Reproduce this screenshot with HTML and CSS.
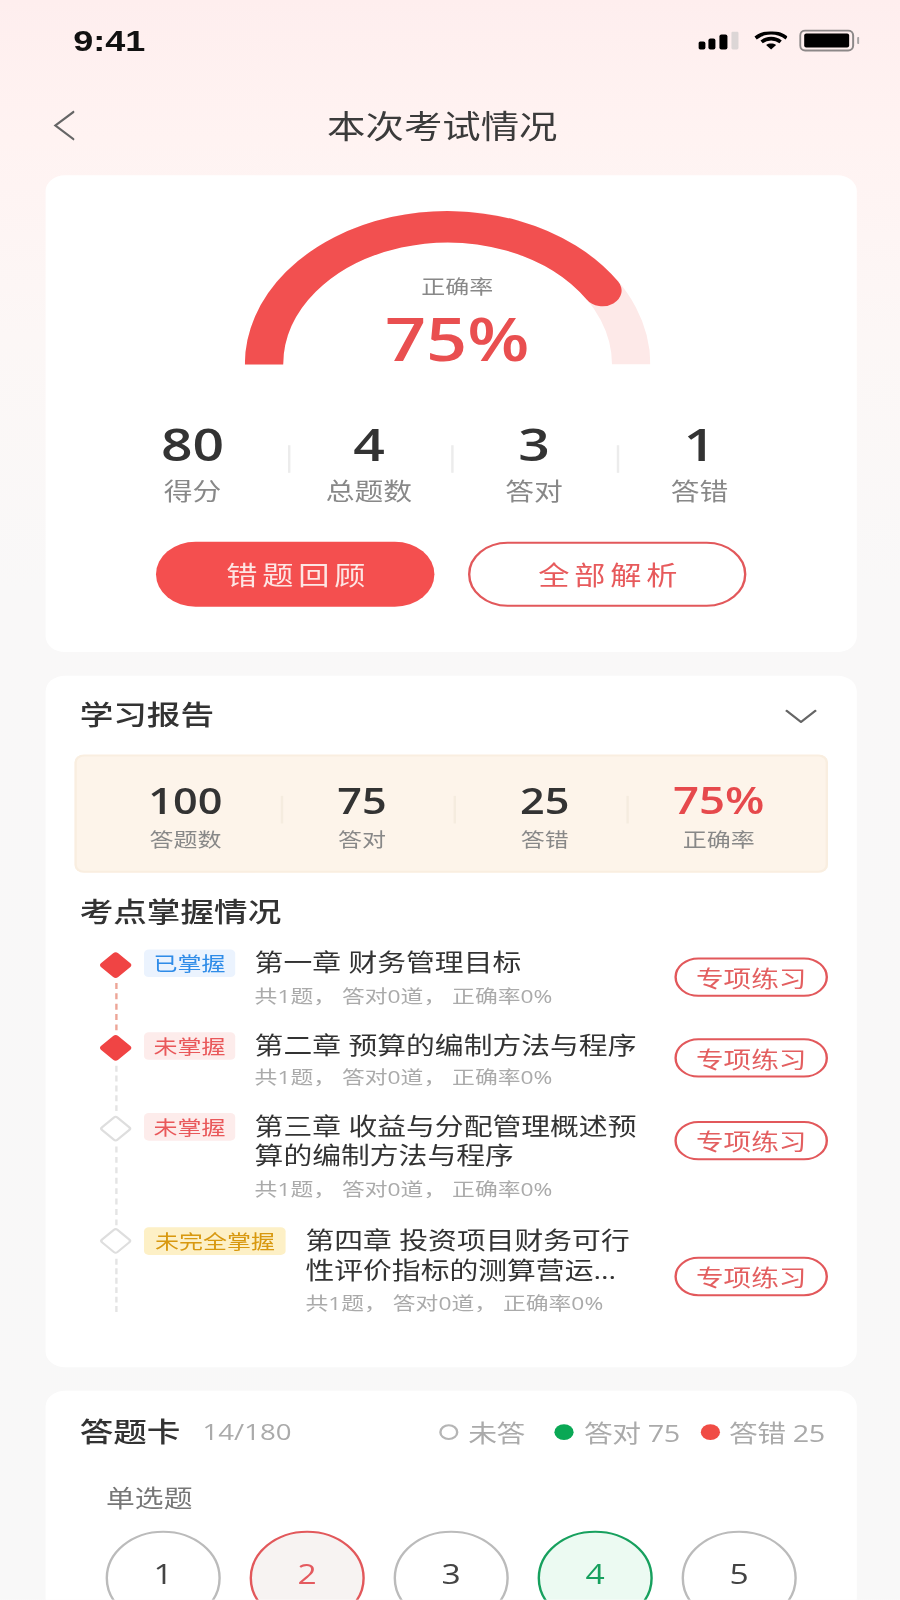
FILE: index.html
```html
<!DOCTYPE html>
<html lang="zh-CN">
<head>
<meta charset="utf-8">
<title>本次考试情况</title>
<link rel="stylesheet" href="styles.css">
</head>
<body>
<div class="screen">
  <div class="status">
    <span class="time">9:41</span>
    <div class="status-icons">
      <svg class="i-signal" viewBox="0 0 40 18" preserveAspectRatio="none"><rect x="0" y="10" width="7" height="8" rx="2"/><rect x="10" y="7" width="7" height="11" rx="2"/><rect x="21" y="3" width="8" height="15" rx="2"/><rect class="off" x="33" y="0" width="7" height="18" rx="1.5"/></svg>
      <svg class="i-wifi" viewBox="0 0 35 18" preserveAspectRatio="none"><path class="wave" d="M2 6.5C11 -0.5 24 -0.5 33 6.5"/><path class="wave" d="M8 10.5C13.5 6 21.500 6 27 10.500"/><path d="M12.500 13.500C15.500 11.500 19.500 11.500 22.500 13.500L17.500 18Z"/></svg>
      <svg class="i-battery" viewBox="0 0 61 22" preserveAspectRatio="none"><rect class="shell" x="1" y="1" width="53" height="20" rx="5"/><rect x="5" y="4" width="45" height="14" rx="2"/><rect class="cap" x="58" y="7.500" width="2.500" height="7" rx="1"/></svg>
    </div>
  </div>

  <div class="nav">
    <svg class="i-back" viewBox="0 0 9 15" preserveAspectRatio="none"><path d="M8.500 0.500L1 7.500L8.500 14.500"/></svg>
    <span class="nav-title">本次考试情况</span>
  </div>

  <section class="card card-score">
    <div class="gauge">
      <svg class="gauge-svg" viewBox="0 0 169 78"><path class="track" d="M8 78A76.500 70 0 0 1 161 78"/><path class="bar" d="M8 78A76.500 70 0 0 1 149 40.500"/></svg>
      <div class="gauge-text">
        <span class="gauge-label">正确率</span>
        <span class="gauge-value">75%</span>
      </div>
    </div>
    <div class="score-stats">
      <div class="score-stat"><b>80</b><span>得分</span></div>
      <div class="score-stat sep"><b>4</b><span>总题数</span></div>
      <div class="score-stat sep"><b>3</b><span>答对</span></div>
      <div class="score-stat sep"><b>1</b><span>答错</span></div>
    </div>
    <div class="actions">
      <a class="btn btn-fill">错题回顾</a>
      <a class="btn btn-line">全部解析</a>
    </div>
  </section>

  <section class="card card-report">
    <div class="report-head">
      <h2 class="h">学习报告</h2>
      <svg class="i-down" viewBox="0 0 14 7" preserveAspectRatio="none"><path d="M0.500 0.500L7 6.500L13.500 0.500"/></svg>
    </div>
    <div class="panel">
      <div class="panel-item w1"><b>100</b><span>答题数</span></div>
      <div class="panel-item w2 shift-l sep"><b>75</b><span>答对</span></div>
      <div class="panel-item w2 shift-r sep"><b>25</b><span>答错</span></div>
      <div class="panel-item w3 sep"><b class="red">75%</b><span>正确率</span></div>
    </div>
    <h2 class="h h-points">考点掌握情况</h2>
    <div class="points">
      <div class="row">
        <div class="marker"><i class="dia on"></i><i class="line hot"></i></div>
        <span class="tag blue">已掌握</span>
        <div class="body">
          <div class="t">第一章 财务管理目标</div>
          <div class="s">共1题， 答对0道， 正确率0%</div>
        </div>
        <a class="practice">专项练习</a>
      </div>
      <div class="row">
        <div class="marker"><i class="dia on"></i><i class="line"></i></div>
        <span class="tag pink">未掌握</span>
        <div class="body">
          <div class="t">第二章 预算的编制方法与程序</div>
          <div class="s">共1题， 答对0道， 正确率0%</div>
        </div>
        <a class="practice">专项练习</a>
      </div>
      <div class="row">
        <div class="marker"><i class="dia"></i><i class="line"></i></div>
        <span class="tag pink">未掌握</span>
        <div class="body body-tall">
          <div class="t">第三章 收益与分配管理概述预<br>算的编制方法与程序</div>
          <div class="s">共1题， 答对0道， 正确率0%</div>
        </div>
        <a class="practice">专项练习</a>
      </div>
      <div class="row row-last">
        <div class="marker"><i class="dia"></i><i class="line"></i></div>
        <span class="tag amber">未完全掌握</span>
        <div class="body body-end">
          <div class="t">第四章 投资项目财务可行<br>性评价指标的测算营运...</div>
          <div class="s">共1题， 答对0道， 正确率0%</div>
        </div>
        <a class="practice practice-low">专项练习</a>
      </div>
    </div>
  </section>

  <section class="card card-sheet">
    <div class="sheet-head">
      <h2 class="h">答题卡</h2>
      <span class="count">14/180</span>
      <div class="legend">
        <span class="lg lg-first"><i class="dot ring"></i>未答</span>
        <span class="lg"><i class="dot green"></i>答对 75</span>
        <span class="lg"><i class="dot redd"></i>答错 25</span>
      </div>
    </div>
    <div class="qtype">单选题</div>
    <div class="nums">
      <span class="num">1</span>
      <span class="num wrong">2</span>
      <span class="num">3</span>
      <span class="num right">4</span>
      <span class="num">5</span>
    </div>
  </section>
</div>
</body>
</html>
```

FILE: styles.css
```css
* { box-sizing: border-box; }
html, body { margin: 0; padding: 0; width: 900px; height: 1600px; overflow: hidden; background: #f8f8f8; }
body { font-family: "Open Sans", "Noto Sans CJK SC", sans-serif; color: #333; }
b { font-weight: 600; }
h2 { margin: 0; }

.screen {
  width: 375px;
  height: 812px;
  overflow: hidden;
  transform: scale(2.4, 1.97);
  transform-origin: 0 0;
  filter: blur(0.3px);
  background: linear-gradient(#feeeee 0, #fff3f2 70px, #fcf7f6 170px, #f9f8f8 300px, #f8f8f8 100%);
}

.status { height: 42px; display: flex; align-items: center; padding: 0 16.7px 0 30.5px; }
.time { font-family: "Liberation Sans", sans-serif; font-weight: 700; font-size: 15px; color: #111; padding-bottom: 2px; }
.status-icons { margin-left: auto; display: flex; align-items: center; }
.status-icons svg { display: block; fill: #000; }
.i-signal { width: 16.7px; height: 9.1px; }
.i-signal .off { fill: #dcd6d6; }
.i-wifi { width: 14.6px; height: 9.1px; margin-left: 6.2px; }
.i-wifi .wave { fill: none; stroke: #000; stroke-width: 3.6; }
.i-battery { width: 25.4px; height: 11.2px; margin-left: 4.6px; }
.i-battery .shell { fill: none; stroke: #8c8888; stroke-width: 2; }
.i-battery .cap { fill: #a9a5a5; }

.nav { height: 44px; display: flex; align-items: center; justify-content: center; position: relative; }
.nav-title { font-size: 16px; color: #3b3b3b; margin-left: -6.4px; padding-bottom: 3px; }
.i-back { position: absolute; left: 21.500px; top: 14px; width: 9.500px; height: 15.500px; fill: none; stroke: #666; }
.i-back path, .i-down path { vector-effect: non-scaling-stroke; stroke-width: 1px; }

.card { margin: 0 18px 0 19px; background: #fff; border-radius: 8px; }
.card-score { margin-top: 3px; padding: 17.600px 0 23.300px; }
.card-report { margin-top: 12.500px; padding: 9.600px 12px 25.700px; }
.card-sheet { margin-top: 11.500px; padding: 10.800px 13.400px 0 14.200px; }

.gauge { position: relative; width: 169px; height: 78px; margin-left: 83px; }
.gauge-svg { display: block; width: 169px; height: 78px; fill: none; stroke-width: 16; }
.gauge-svg .track { stroke: #fde9e8; }
.gauge-svg .bar { stroke: #f25050; stroke-linecap: round; }
.gauge-text { position: absolute; left: 0; right: -8px; top: 31.500px; display: flex; flex-direction: column; align-items: center; }
.gauge-label { font-size: 10px; line-height: 15px; color: #888; }
.gauge-value { font-size: 30px; font-weight: 600; line-height: 38px; color: #e94f50; }

.score-stats { display: grid; grid-template-columns: 78.500px 68.500px 69px 69px; margin: 26.800px 0 0 22px; }
.score-stat { position: relative; display: flex; flex-direction: column; align-items: center; }
.score-stat b { font-size: 23px; line-height: 28px; color: #333; }
.score-stat span { font-size: 12px; line-height: 16px; margin-top: 3px; color: #888; }
.sep::before { content: ""; position: absolute; left: 0; background: #ececec; width: 1px; }
.score-stat.sep::before { top: 14.500px; height: 14px; }

.actions { display: flex; gap: 14px; margin: 16.300px 0 0 46px; }
.btn { width: 116px; height: 33px; border-radius: 16.500px; display: flex; align-items: center; justify-content: center; font-size: 13px; letter-spacing: 2px; padding-left: 2.600px; }
.btn-fill { background: #f44f4f; color: #fde6e4; }
.btn-line { background: #fff; color: #e75a5c; border: 1px solid #e2585b; }

.h { font-size: 14px; line-height: 20px; font-weight: 500; color: #333; margin-left: 2.200px; }
.report-head { display: flex; align-items: center; justify-content: space-between; }
.i-down { width: 13.500px; height: 7px; margin-right: 4.400px; fill: none; stroke: #666; }

.panel { display: flex; height: 60.600px; margin-top: 9.800px; padding-top: 12.200px; background: #fdf4ea; border-radius: 4px; box-shadow: inset 0 0 0 1px #f9eee0; }
.panel-item { position: relative; display: flex; flex-direction: column; align-items: center; }
.w1 { width: 85.500px; padding-left: 7px; }
.w2 { width: 72px; }
.w3 { flex: 1; padding-right: 6.600px; }
.shift-l { padding-right: 3.400px; }
.shift-r { padding-left: 5px; }
.panel-item b { font-size: 18px; line-height: 22px; color: #333; }
.panel-item b.red { font-size: 19px; color: #e6494c; }
.panel-item span { font-size: 10px; line-height: 14px; margin-top: 2.400px; color: #888; }
.panel-item.sep::before { top: 9px; height: 14px; background: #f5ecdf; }

.h-points { margin-top: 9.500px; }
.points { margin-top: 8.300px; }
.row { display: flex; align-items: flex-start; }
.marker { align-self: stretch; width: 12.500px; margin-left: 10.900px; display: flex; flex-direction: column; align-items: center; }
.dia { display: block; width: 12.500px; height: 11.400px; margin-top: 2.300px; flex: none; position: relative; }
.dia::before { content: ""; position: absolute; left: 1.600px; top: 1.500px; width: 8.400px; height: 8.400px; transform: rotate(45deg); border-radius: 1.500px; background: #fff; border: 1px solid #dedede; }
.dia.on::before { background: #f04444; border-color: #f04444; }
.line { display: block; flex: 1; margin-top: 4px; width: 0; border-left: 1px dashed #e4e4e4; }
.line.hot { border-left-color: #eda597; }
.row-last .line { margin-bottom: 3px; }

.tag { flex: none; margin: 1px 0 0 5.600px; height: 14px; padding: 0 4px; border-radius: 2px; font-size: 10px; line-height: 14px; }
.blue { background: #ebf3fe; color: #2f8ce8; }
.pink { background: #fdeceb; color: #e9585a; }
.amber { background: #fdf0c6; color: #d8980f; padding: 0 4.600px; }

.body { margin-left: 8.100px; padding-bottom: 10px; }
.body-tall { padding-bottom: 11px; }
.body-end { padding-bottom: 0; }
.t { font-size: 12px; line-height: 14.600px; padding-top: 0.700px; color: #333; white-space: nowrap; }
.body-end .t { padding-top: 1.700px; }
.s { font-size: 9.500px; line-height: 15px; margin-top: 1.300px; color: #aaa; white-space: nowrap; }

.practice { flex: none; margin: 4.600px 0 0 auto; width: 64px; height: 20px; border: 1px solid #e2585b; border-radius: 10px; display: flex; align-items: center; justify-content: center; font-size: 11.500px; color: #e35f60; }
.practice-low { margin-top: 16.500px; }

.sheet-head { display: flex; align-items: center; }
.sheet-head .h { margin-left: 0; }
.count { font-size: 11.500px; color: #aaa; margin-left: 9.200px; }
.legend { margin-left: auto; display: flex; gap: 8.400px; }
.lg { display: flex; align-items: center; font-size: 12px; letter-spacing: -0.200px; color: #aaa; white-space: nowrap; }
.lg-first { margin-right: 4.100px; }
.dot { width: 8px; height: 8px; border-radius: 50%; margin-right: 4.200px; }
.ring { border: 1px solid #b5b5b5; }
.green { background: #0aa855; }
.redd { background: #f04c45; }

.qtype { margin: 16.400px 0 0 11px; font-size: 12px; line-height: 16px; color: #777; }
.nums { display: flex; gap: 12px; margin: 7.800px 0 0 10.800px; }
.num { width: 48px; height: 48px; flex: none; border: 1px solid #bbb; border-radius: 50%; display: flex; align-items: center; justify-content: center; padding-bottom: 5px; font-size: 14px; color: #444; }
.wrong { border-color: #e2585b; background: #f7f3f2; color: #e45a5f; }
.right { border-color: #17a05e; background: #ecfaf2; color: #17a05e; }
```
